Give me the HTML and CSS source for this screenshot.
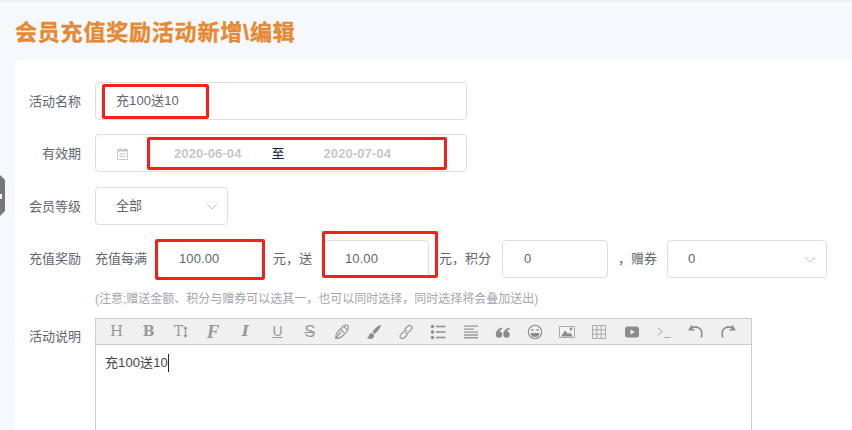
FILE: index.html
```html
<!DOCTYPE html>
<html lang="zh-CN">
<head>
<meta charset="utf-8">
<title>会员充值奖励活动新增\编辑</title>
<link rel="stylesheet" href="styles.css">
</head>
<body>
<div class="side-tab"><i></i></div>
<main class="page">
  <h1 class="title">会员充值奖励活动新增\编辑</h1>
  <section class="card">
    <div class="row row-first">
      <label class="label">活动名称</label>
      <div class="field wide"><span class="value">充100送10</span></div>
    </div>
    <div class="row row-date">
      <label class="label">有效期</label>
      <div class="field wide date">
        <svg class="cal" viewBox="0 0 13 13" width="13" height="13"><path d="M1.500 2.500h10v10h-10zM4 .5v2M9 .5v2" fill="none" stroke="#c5c8ce"/><path d="M1.500 3h10v1.500h-10zM3.500 6.500h6v1h-6zM3.500 9h6v1h-6z" fill="#c5c8ce"/></svg>
        <span class="date-text start">2020-06-04</span>
        <span class="date-sep">至</span>
        <span class="date-text end">2020-07-04</span>
      </div>
    </div>
    <div class="row row-std">
      <label class="label">会员等级</label>
      <div class="field select level"><span class="value">全部</span><svg class="chev" viewBox="0 0 12 7" width="12" height="7"><path d="M1 1l5 5 5-5" fill="none" stroke="#c5c8ce"/></svg></div>
    </div>
    <div class="row row-std reward">
      <label class="label">充值奖励</label>
      <span class="unit u4">充值每满</span>
      <div class="field num"><span class="value">100.00</span></div>
      <span class="unit u3">元，送</span>
      <div class="field num"><span class="value">10.00</span></div>
      <span class="unit u4b">元，积分</span>
      <div class="field num"><span class="value">0</span></div>
      <span class="unit u3b">，赠券</span>
      <div class="field select coupon"><span class="value">0</span><svg class="chev" viewBox="0 0 12 7" width="12" height="7"><path d="M1 1l5 5 5-5" fill="none" stroke="#c5c8ce"/></svg></div>
    </div>
    <p class="note">(注意;赠送金额、积分与赠券可以选其一，也可以同时选择，同时选择将会叠加送出)</p>
    <div class="row editor-row">
      <label class="label editor-label">活动说明</label>
      <div class="editor">
        <div class="toolbar">
          <span class="tool t-h">H</span>
          <span class="tool t-b">B</span>
          <span class="tool t-t">T<svg viewBox="0 0 5 12" width="5" height="12"><path d="M2.500 1v10M1 3l1.500-2L4 3M1 9l1.500 2L4 9" fill="none" stroke="#999" stroke-width="1.200"/></svg></span>
          <span class="tool t-f">F</span>
          <span class="tool t-i">I</span>
          <span class="tool t-u">U</span>
          <span class="tool t-s">S</span>
          <span class="tool"><svg viewBox="0 0 16 16" width="16" height="16"><path d="M1.500 14.500c0-3 .5-5 2.500-7l5-5c2-1.500 4-1.500 5-.5 1 2 0 3.500-1 5.500l-5 5c-2 2-3 2-6.500 2zM2 14l5-6M6.500 5l3.500 3.500M10 2.500l3 3" fill="none" stroke="#999" stroke-width="1.200"/></svg></span>
          <span class="tool"><svg viewBox="0 0 16 16" width="16" height="16"><path d="M15 1c-2 0-6 3-8.500 7l2 2C12 7.500 15 3 15 1zM6 9c-2 0-2.500 1-3 2.500-.3 1-1 1.500-2 1.800C2 15 5 15.500 7 14c1.300-1 1.500-2.800.7-3.600z" fill="#8c8c8c"/></svg></span>
          <span class="tool"><svg viewBox="0 0 16 16" width="16" height="16"><path d="M6.500 5.500l3-3c1.500-1.500 3-1.200 3.800-.4s1 2.300-.4 3.800l-2.500 2.500c-1.400 1.400-2.800 1-3.600.2M9.500 10.500l-3 3c-1.500 1.500-3 1.200-3.800.4s-1-2.300.4-3.800l2.500-2.500c1.400-1.400 2.800-1 3.600-.2" fill="none" stroke="#999" stroke-width="1.300"/></svg></span>
          <span class="tool"><svg viewBox="0 0 16 16" width="16" height="16"><g fill="#8c8c8c"><circle cx="2.500" cy="2.500" r="1.700"/><circle cx="2.500" cy="8" r="1.700"/><circle cx="2.500" cy="13.500" r="1.700"/><path d="M6 1.700h9.500v1.600H6zM6 7.200h9.500v1.600H6zM6 12.700h9.500v1.600H6z"/></g></svg></span>
          <span class="tool"><svg viewBox="0 0 16 16" width="16" height="16"><path d="M1 1.500h14v1.300H1zM1 4.500h10v1.300H1zM1 7.500h14v1.300H1zM1 10.200h14v1.500H1zM1 13h14v1.500H1z" fill="#999"/></svg></span>
          <span class="tool"><svg viewBox="0 0 16 16" width="16" height="16"><g fill="#8c8c8c"><circle cx="4" cy="10.500" r="3.200"/><path d="M1 10C1 7 3 4.500 7 3.800v1.500C5 6 4 7.500 4 9z"/><circle cx="11.500" cy="10.500" r="3.200"/><path d="M8.500 10c0-3 2-5.500 6-6.200v1.500c-2 .7-3 2.200-3 3.700z"/></g></svg></span>
          <span class="tool"><svg viewBox="0 0 16 16" width="16" height="16"><circle cx="8" cy="8" r="6.700" fill="none" stroke="#8c8c8c" stroke-width="1.100"/><circle cx="5.500" cy="6" r="1.100" fill="#8c8c8c"/><circle cx="10.500" cy="6" r="1.100" fill="#8c8c8c"/><path d="M3.500 9h9c0 2.500-2 4-4.500 4s-4.500-1.500-4.500-4z" fill="#8c8c8c"/></svg></span>
          <span class="tool"><svg viewBox="0 0 16 16" width="16" height="16"><path d="M.5 2.500h15v11H.5z" fill="#f4f4f4" stroke="#aaa"/><path d="M2 12.500l4-6 3 3.500 2-1.500 3 4z" fill="#8c8c8c"/><circle cx="12" cy="5" r="1.400" fill="#8c8c8c"/></svg></span>
          <span class="tool"><svg viewBox="0 0 16 16" width="16" height="16"><path d="M1.500 1.500h13v13h-13zM1.500 5.800h13M1.500 10.200h13M5.800 1.500v13M10.200 1.500v13" fill="none" stroke="#aaa"/></svg></span>
          <span class="tool"><svg viewBox="0 0 16 16" width="16" height="16"><rect x="1" y="2.500" width="14" height="11" rx="2.500" fill="#8c8c8c"/><path d="M6.500 5.500L11 8l-4.500 2.500z" fill="#f0f0f0"/></svg></span>
          <span class="tool"><svg viewBox="0 0 16 16" width="16" height="16"><path d="M2 4l4.500 3.500L2 11M8 13.500h6.500" fill="none" stroke="#aaa"/></svg></span>
          <span class="tool"><svg viewBox="0 0 16 16" width="16" height="16"><path d="M4 1.500L1.500 5.500l4.800.5" fill="none" stroke="#8c8c8c" stroke-width="1.600"/><path d="M2 5.500c2.500-2.500 6-3 8.500-1.800 3 1.500 4 5 2.800 9.800" fill="none" stroke="#8c8c8c" stroke-width="1.600"/></svg></span>
          <span class="tool"><svg viewBox="0 0 16 16" width="16" height="16"><path d="M12 1.500l2.500 4-4.800.5" fill="none" stroke="#8c8c8c" stroke-width="1.600"/><path d="M14 5.500c-2.500-2.500-6-3-8.500-1.800-3 1.500-4 5-2.800 9.800" fill="none" stroke="#8c8c8c" stroke-width="1.600"/></svg></span>
        </div>
        <div class="editor-body"><span class="editor-text">充100送10</span></div>
      </div>
    </div>
  </section>
</main>
<div class="mark m1"></div>
<div class="mark m2"></div>
<div class="mark m3"></div>
<div class="mark m4"></div>
</body>
</html>
```
FILE: styles.css
```css
* { box-sizing: border-box; }
html, body { margin: 0; height: 100%; overflow: hidden; }
body {
  background: #f5f8fd;
  font-family: "Liberation Sans", "Noto Sans CJK SC", sans-serif;
  font-size: 13px;
  color: #606570;
  border-top: 2px solid #eceef1;
}
.page { padding-left: 15px; }
.title {
  margin: 0;
  height: 58px;
  padding-top: 16px;
  line-height: 30px;
  font-size: 22px;
  letter-spacing: 0.8px;
  font-weight: 700;
  color: #e58a33;
  -webkit-text-stroke: 0.4px #e58a33;
}
.card {
  background: #fff;
  border-radius: 5px 0 0 0;
  padding: 22px 0 0 14px;
  height: 500px;
}
.row { display: flex; align-items: center; }
.row-date { margin-top: 14px; }
.row-std { margin-top: 15px; }
.label {
  width: 52px;
  margin-right: 14px;
  padding-bottom: 2px;
  text-align: right;
  white-space: nowrap;
}
.field {
  height: 38px;
  border: 1px solid #dcdee2;
  border-radius: 4px;
  background: #fff;
  display: flex;
  align-items: center;
  padding-left: 20px;
  flex: none;
}
.wide { width: 372px; }
.level { width: 133px; padding-right: 9px; }
.coupon { width: 160px; padding-right: 10px; }
.select { justify-content: space-between; }
.num { width: 106px; padding-left: 21px; }
.value { padding-bottom: 2px; letter-spacing: 0.1px; }
.wide .value, .level .value { padding-bottom: 4px; }
.date .cal { flex: none; }
.date-text { color: #c5c8ce; font-size: 13px; letter-spacing: 0.1px; white-space: nowrap; font-weight: 700; }
.start { margin-left: 45px; }
.date-sep { color: #17233d; margin-left: 30px; padding-bottom: 2px; }
.end { margin-left: 39px; }
.reward { gap: 10px; }
.reward .label { margin-right: 4px; padding-bottom: 4px; }
.unit { flex: none; white-space: nowrap; padding-bottom: 4px; }
.u4 { width: 52px; }
.u3 { width: 40px; }
.u4b { width: 53px; }
.u3b { width: 39px; }
.note {
  margin: 13px 0 0 66px;
  font-size: 12px;
  line-height: 14px;
  color: #a3a6ad;
  white-space: nowrap;
  padding-top: 1px;
}
.editor-row { margin-top: 12px; align-items: flex-start; }
.editor-label { margin-top: 9px; line-height: 20px; padding-bottom: 0; }
.editor { width: 657px; height: 200px; border: 1px solid #ccc; }
.toolbar {
  height: 26px;
  background: #f0f0f0;
  border-bottom: 1px solid #ccc;
  display: grid;
  grid-template-columns: repeat(20, 32.2px);
  padding-left: 4.500px;
  align-items: center;
  justify-items: center;
}
.tool {
  height: 25px;
  display: flex;
  align-items: center;
  justify-content: center;
  color: #999;
  font-size: 16px;
  line-height: 25px;
}
.tool svg { display: block; }
.t-h { font-family: "DejaVu Serif", serif; font-size: 15px; }
.t-b { font-family: "DejaVu Serif", serif; font-weight: 700; font-size: 14px; }
.t-t { font-family: "DejaVu Serif", serif; font-size: 14px; }
.t-f { font-family: "Liberation Serif", serif; font-style: italic; font-weight: 700; font-size: 19px; }
.t-i { font-family: "DejaVu Serif", serif; font-style: italic; font-weight: 700; font-size: 15px; }
.t-u { font-family: "Liberation Sans", sans-serif; text-decoration: underline; font-size: 14px; }
.t-s { font-family: "Liberation Sans", sans-serif; text-decoration: line-through; font-size: 16px; }
.editor-body { padding: 9px 9px; line-height: 18px; color: #444; }
.editor-text { border-right: 1px solid #222; display: inline-block; letter-spacing: 0.1px; }
.side-tab {
  position: absolute;
  left: 0;
  top: 175px;
  width: 5px;
  height: 41px;
  background: #777;
  clip-path: polygon(0 0, 100% 12%, 100% 88%, 0 100%);
}
.side-tab i {
  position: absolute;
  left: 0;
  top: 19px;
  width: 2px;
  height: 5px;
  background: #fff;
}
.mark {
  position: absolute;
  border: 3px solid #f5201b;
  border-radius: 2px;
}
.m1 { left: 102px; top: 84px; width: 107px; height: 35px; }
.m2 { left: 147px; top: 137px; width: 300px; height: 33px; }
.m3 { left: 155px; top: 239px; width: 110px; height: 41px; }
.m4 { left: 322px; top: 231px; width: 116px; height: 47px; }
```
